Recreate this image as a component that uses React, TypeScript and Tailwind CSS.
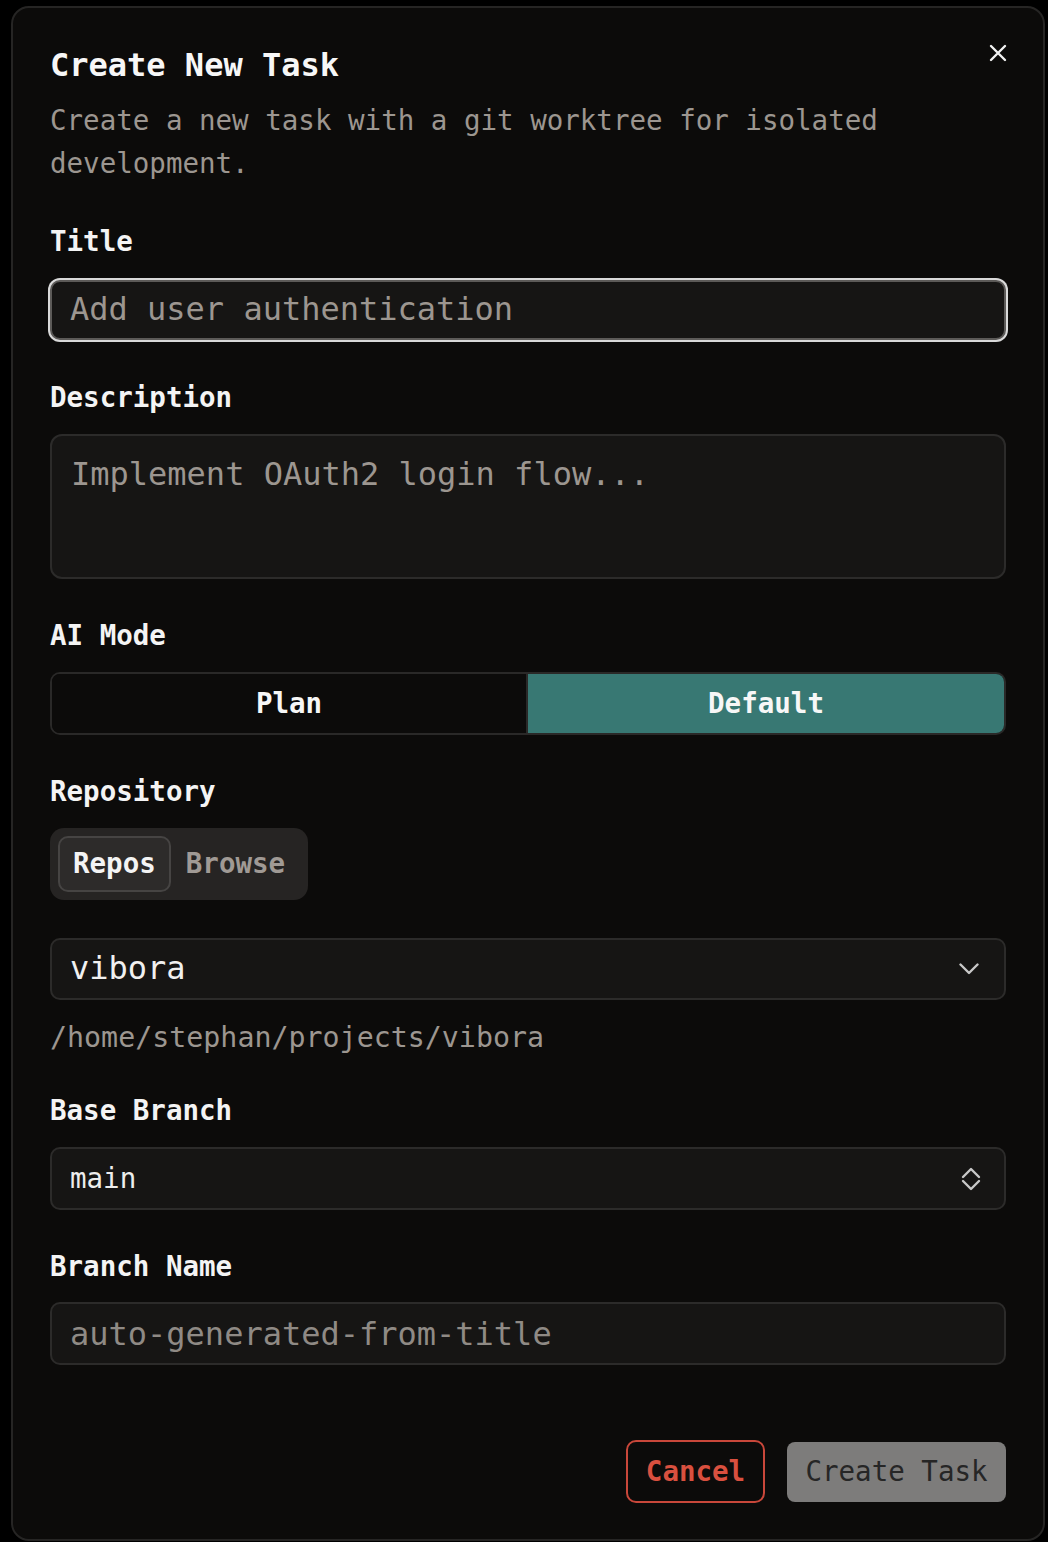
// "Create New Task" dialog — dark, monospace, rendered at 2x scale.
import type { ReactNode } from "react";

const MONO = "font-['DejaVu_Sans_Mono','Liberation_Mono',monospace]";

function Label({ children, className = "" }: { children: ReactNode; className?: string }) {
  return (
    <div className={`text-[27.5px] font-bold leading-[28px] text-[#f4f4f4] ${className}`}>{children}</div>
  );
}

function CloseIcon() {
  return (
    <svg width="18" height="18" viewBox="0 0 18 18" fill="none" stroke="#f2f2f2" strokeWidth="2.4" strokeLinecap="round">
      <path d="M2 2 L16 16 M16 2 L2 16" />
    </svg>
  );
}

function ChevronDown() {
  return (
    <svg width="20" height="12" viewBox="0 0 20 12" fill="none" stroke="#c8c8c8" strokeWidth="2.4" strokeLinecap="round" strokeLinejoin="round">
      <path d="M1.5 1.5 L10 10 L18.5 1.5" />
    </svg>
  );
}

function ChevronsUpDown() {
  return (
    <svg width="20" height="24" viewBox="0 0 20 24" fill="none" stroke="#c8c8c8" strokeWidth="2.4" strokeLinecap="round" strokeLinejoin="round">
      <path d="M2 10 L10 2 L18 10" />
      <path d="M2 14 L10 22 L18 14" />
    </svg>
  );
}

export default function App() {
  return (
    <div className={`min-h-[1542px] w-[1048px] bg-black pt-[6px] ${MONO}`}>
      <div className="ml-[11px] flex h-[1535px] w-[1034px] flex-col rounded-[18px] border-2 border-[#262524] bg-[#0c0b0a] px-[37px] pt-[37px]">
        {/* header */}
        <div className="flex items-start justify-between">
          <div className="text-[32px] font-bold leading-[40px] text-[#f7f7f7]">Create New Task</div>
          <div className="mr-[-1px] mt-[-1px]">
            <CloseIcon />
          </div>
        </div>
        <p className="mt-[14px] w-[880px] text-[27.5px] leading-[43px] text-[#9c9690]">
          Create a new task with a git worktree for isolated development.
        </p>

        {/* title */}
        <Label className="mt-[42px]">Title</Label>
        <div className="mt-[25px] flex h-[60px] items-center rounded-[10px] border-2 border-[#5c5a58] bg-[#161514] px-[18px] pb-[3px] text-[32px] text-[#9c9690] ring-2 ring-[#d9d9d9]">
          Add user authentication
        </div>

        {/* description */}
        <Label className="mt-[43px]">Description</Label>
        <div className="mt-[23px] h-[145px] rounded-[12px] border-2 border-[#2c2b2a] bg-[#161514] px-[19px] pt-[18px] text-[32px] leading-[40px] text-[#9c9690]">
          Implement OAuth2 login flow...
        </div>

        {/* AI mode */}
        <Label className="mt-[42px]">AI Mode</Label>
        <div className="mt-[23px] grid h-[63px] grid-cols-2 overflow-hidden rounded-[10px] border-2 border-[#2a2928]">
          <div className="flex items-center justify-center border-r-2 border-[#2a2928] bg-[#0c0b0a] text-[27.5px] font-bold text-[#f7f7f7]">
            Plan
          </div>
          <div className="flex items-center justify-center bg-[#387873] text-[27.5px] font-bold text-[#f7f7f7]">
            Default
          </div>
        </div>

        {/* repository */}
        <Label className="mt-[42px]">Repository</Label>
        <div className="mt-[23px] flex h-[72px] w-[258px] items-center gap-[15px] rounded-[14px] bg-[#262423] px-[8px]">
          <div className="flex h-[56px] items-center rounded-[10px] border-2 border-[#464443] bg-[#2d2b2a] px-[13px] text-[27.5px] font-bold text-[#f4f4f4]">
            Repos
          </div>
          <div className="text-[27.5px] font-bold text-[#a09a95]">Browse</div>
        </div>

        <div className="mt-[38px] flex h-[62px] items-center justify-between rounded-[10px] border-2 border-[#2c2b2a] bg-[#161514] pl-[18px] pr-[25px] text-[32px] text-[#f0f0f0]">
          <span className="pb-[2px]">vibora</span>
          <ChevronDown />
        </div>
        <div className="mt-[24px] text-[28.3px] leading-[28px] text-[#9c9690]">/home/stephan/projects/vibora</div>

        {/* base branch */}
        <Label className="mt-[44px]">Base Branch</Label>
        <div className="mt-[23px] flex h-[63px] items-center justify-between rounded-[10px] border-2 border-[#2c2b2a] bg-[#161514] pl-[18px] pr-[23px] text-[27.5px] text-[#ededed]">
          <span>main</span>
          <ChevronsUpDown />
        </div>

        {/* branch name */}
        <Label className="mt-[42px]">Branch Name</Label>
        <div className="mt-[22px] flex h-[63px] items-center rounded-[10px] border-2 border-[#2c2b2a] bg-[#161514] px-[18px] text-[32px] text-[#8f8a85]">
          auto-generated-from-title
        </div>

        {/* footer */}
        <div className="mt-[75px] flex items-center justify-end gap-[22px]">
          <div className="flex h-[63px] w-[139px] items-center justify-center rounded-[10px] border-2 border-[#c9473a] text-[27.5px] font-bold text-[#d9503f]">
            Cancel
          </div>
          <div className="flex h-[60px] w-[219px] items-center justify-center rounded-[8px] bg-[#7d7c7b] text-[27.5px] text-[#262626]">
            Create Task
          </div>
        </div>
      </div>
    </div>
  );
}
